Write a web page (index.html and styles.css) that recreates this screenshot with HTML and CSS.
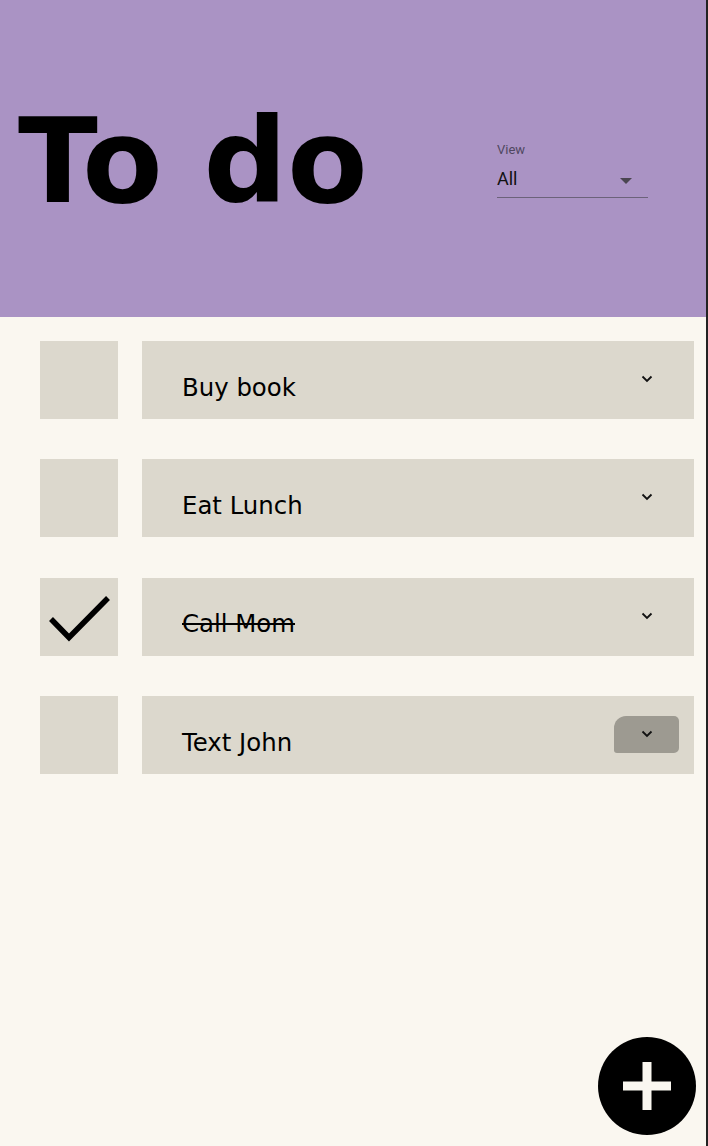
FILE: index.html
```html
<!DOCTYPE html>
<html>
<head>
<meta charset="utf-8">
<link rel="stylesheet" href="styles.css">
</head>
<body>
<div class="app">
  <header class="header">
    <h1 class="title">To do</h1>
    <div class="view">
      <div class="view-label">View</div>
      <div class="view-select">
        <span>All</span>
        <svg class="caret" width="12" height="6" viewBox="0 0 12 6"><path d="M0 0 L12 0 L6 6 Z" fill="#4a4550"/></svg>
      </div>
    </div>
  </header>
  <main class="list">
    <div class="row">
      <div class="check"></div>
      <div class="item"><span class="label">Buy book</span><span class="chev"><svg width="12" height="8" viewBox="0 0 12 8"><path d="M1.5 1.5 L6 6 L10.5 1.5" fill="none" stroke="#111" stroke-width="1.8"/></svg></span></div>
    </div>
    <div class="row">
      <div class="check"></div>
      <div class="item"><span class="label">Eat Lunch</span><span class="chev"><svg width="12" height="8" viewBox="0 0 12 8"><path d="M1.5 1.5 L6 6 L10.5 1.5" fill="none" stroke="#111" stroke-width="1.8"/></svg></span></div>
    </div>
    <div class="row">
      <div class="check"><svg width="78" height="78" viewBox="0 0 78 78"><path d="M11 41 L29 59.5 L68 20" fill="none" stroke="#000" stroke-width="5.5"/></svg></div>
      <div class="item"><span class="label done">Call Mom</span><span class="chev"><svg width="12" height="8" viewBox="0 0 12 8"><path d="M1.5 1.5 L6 6 L10.5 1.5" fill="none" stroke="#111" stroke-width="1.8"/></svg></span></div>
    </div>
    <div class="row">
      <div class="check"></div>
      <div class="item"><span class="label">Text John</span><span class="chev active"><svg width="12" height="8" viewBox="0 0 12 8"><path d="M1.5 1.5 L6 6 L10.5 1.5" fill="none" stroke="#111" stroke-width="1.8"/></svg></span></div>
    </div>
  </main>
  <button class="fab" aria-label="Add">
    <svg width="52" height="52" viewBox="0 0 52 52"><path d="M21.5 2 H30.5 V21.5 H50 V30.5 H30.5 V50 H21.5 V30.5 H2 V21.5 H21.5 Z" fill="#faf7f0"/></svg>
  </button>
</div>
</body>
</html>
```

FILE: styles.css
```css
html, body {
  margin: 0;
  padding: 0;
  background: #faf7f0;
}
body {
  width: 708px;
  height: 1146px;
  overflow: hidden;
}
.app {
  position: relative;
  width: 706px;
  height: 1146px;
  border-right: 2px solid #222;
  background: #faf7f0;
  font-family: "DejaVu Sans", Verdana, sans-serif;
}
.header {
  height: 317px;
  background: #aa93c4;
  display: flex;
  align-items: flex-start;
}
.title {
  margin: 92px 0 0 18px;
  font-family: "DejaVu Sans", sans-serif;
  font-weight: bold;
  font-size: 117px;
  line-height: 140px;
  letter-spacing: 0;
  color: #000;
  width: 479px;
  white-space: nowrap;
}
.view {
  margin-top: 142px;
  width: 151px;
}
.view-label {
  font-size: 13px;
  color: #4f4760;
  font-family: "Roboto", sans-serif;
  line-height: 16px;
}
.view-select {
  margin-top: 5px;
  display: flex;
  align-items: center;
  justify-content: space-between;
  border-bottom: 1.5px solid #6c627a;
  height: 35px;
  box-sizing: border-box;
  padding-bottom: 3px;
  font-family: "Roboto", sans-serif;
  font-size: 18px;
  color: #111;
}
.caret {
  margin-right: 16px;
  margin-top: 4px;
}
.list {
  padding: 24px 12px 0 40px;
  display: flex;
  flex-direction: column;
  gap: 40.4px;
}
.row {
  display: flex;
  gap: 24px;
  height: 78px;
}
.check {
  width: 78px;
  height: 78px;
  background: #dcd8cd;
  flex: none;
}
.check svg { display: block; }
.item {
  flex: 1;
  background: #dcd8cd;
  display: flex;
  align-items: center;
  justify-content: space-between;
  padding: 0 15px 0 40px;
  box-sizing: border-box;
}
.label {
  font-size: 24.4px;
  color: #000;
  margin-top: 14px;
}
.label.done {
  text-decoration: line-through;
  text-decoration-thickness: 2px;
}
.chev {
  width: 65px;
  height: 37px;
  display: flex;
  align-items: center;
  justify-content: center;
  margin-top: -2px;
  border-radius: 5px;
}
.chev.active {
  background: #9d9a91;
  border-radius: 12px 5px 5px 3px;
}
.chev svg { display: block; }
.fab {
  position: absolute;
  left: 598px;
  top: 1037px;
  width: 98px;
  height: 98px;
  border-radius: 50%;
  background: #000;
  border: none;
  padding: 0;
  display: flex;
  align-items: center;
  justify-content: center;
}
```
